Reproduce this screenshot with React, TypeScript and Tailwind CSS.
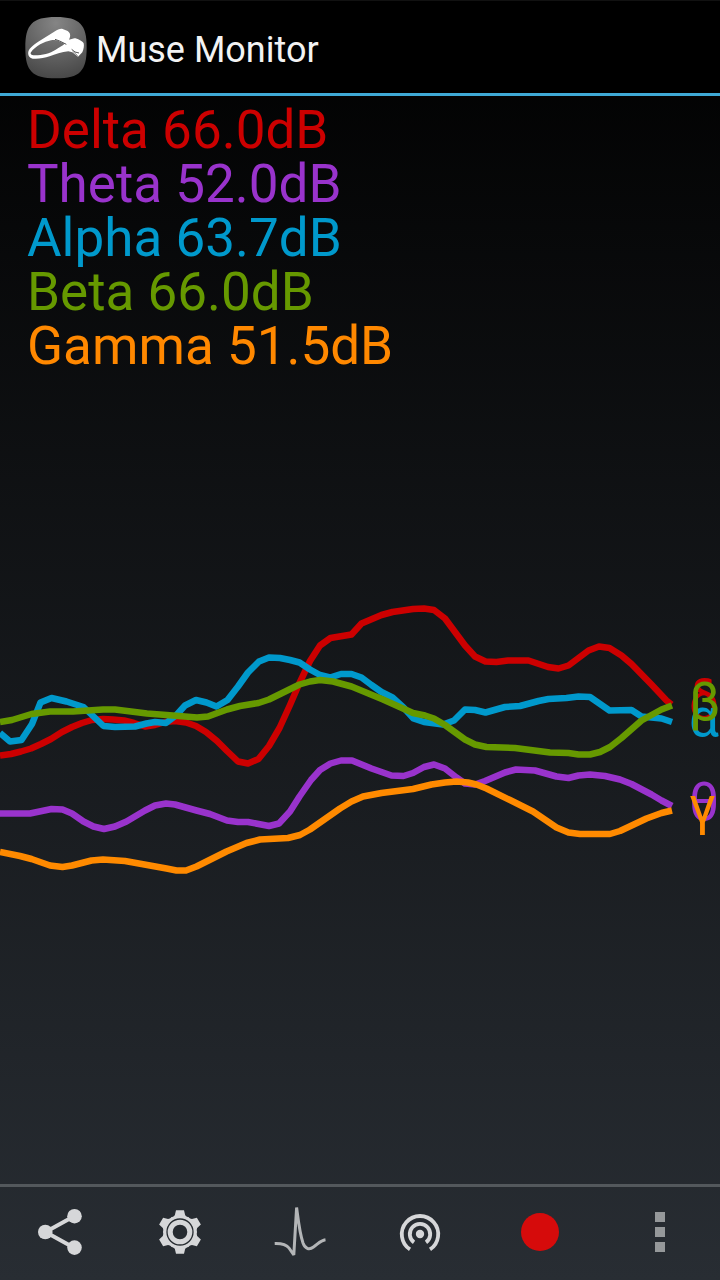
import type { ReactNode } from "react";

type Band = {
  name: string;
  level: string;
  symbol: string;
  textClass: string;
  color: string;
  labelY: number;
  points: string;
};

const bands: Band[] = [
  {
    name: "Delta",
    level: "66.0dB",
    symbol: "δ",
    textClass: "text-[#cc0000]",
    color: "#cc0000",
    labelY: 719,
    points:
      "0,755.5 11,754 21,751.5 31,748.5 41,744 51,739 62,732 72,727 82,723 92,720 103,719 113,719.5 124,720.5 134,723 145,726.5 155,725 165,722 175,721 186,722.5 196,726 206,732 217,741 227,751 238,761.5 248,763.5 258.5,759 269,746 279.5,728 290,705 299.5,683 310,661 320,645.5 330.5,638 351.5,634.5 361.5,623.5 381.5,615 392.5,612 413,609 424,608.5 434,610 445,618.5 465,645.5 475,656.5 485.5,661.5 496.5,662 508,660.5 528.5,660.5 548,667 558.5,668.5 568.5,665.5 588.5,650.5 599,646.5 609.5,648 621.5,655.5 631.5,664 651.5,684.5 666.5,700.5 671.5,704.5",
  },
  {
    name: "Theta",
    level: "52.0dB",
    symbol: "θ",
    textClass: "text-[#9933cc]",
    color: "#9933cc",
    labelY: 820,
    points:
      "0,813.5 30,813.5 51.5,809 62.5,809.5 72,813.5 83.5,821.5 93.5,826.5 104,829 115,826.5 126.5,821.5 145,810.5 155,805.5 166,803.5 175,804.5 196.5,810.5 210,814 227,820.5 238,822 248,822 269,826 279,823.5 290,811.5 299.5,796.5 311,780 320,770 330.5,763.5 341,760.5 352,760.5 371.5,768.5 391.5,775.5 403.5,776 413,773 424,767 434,764.5 445,768.5 456.5,777.5 465,783.5 475,784.5 485,781 505,772.5 516,769.5 535,770.5 556.5,776.5 568.5,778 578.5,775.5 590,774.5 605,776 620,779.5 631.5,784 651.5,794.5 661.5,800.5 672,806",
  },
  {
    name: "Alpha",
    level: "63.7dB",
    symbol: "α",
    textClass: "text-[#0099cc]",
    color: "#0099cc",
    labelY: 736,
    points:
      "0,733 10,741.5 21.5,740 32,724 40.5,702.5 51.5,698 66.5,701.5 83.5,707 93.5,716.5 103.5,726 115,727 135,726.5 146.5,723.5 155,722 166,723 176,715.5 185,705.5 196,700 206.5,702.5 216.5,706.5 227.5,700 238,686.5 248,672.5 259,661.5 269,657.5 280,658 290,660 299.5,662.5 310,669.5 320,675 330,677.5 341,674 351.5,674 361.5,677.5 371.5,685 381.5,692 392.5,697.5 403.5,707.5 413.5,718.5 424,722 443,724.5 454,720.5 465,709.5 475,710 485.5,712.5 505,707 520,706 538.5,701 548.5,699 566.5,698 578.5,696.5 590,697 609.5,710.5 631.5,710 641.5,716.5 661.5,718.5 672,722",
  },
  {
    name: "Beta",
    level: "66.0dB",
    symbol: "β",
    textClass: "text-[#669900]",
    color: "#669900",
    labelY: 720,
    points:
      "0,722 12,720 31.5,714 50,711.5 73,711.5 103,709.5 115,709.5 147,713.5 173,715.5 197,717.5 208,716.5 227,709.5 240,706 258.5,703 269,699.5 299.5,684.5 310,681.5 320,680 333,681.5 351.5,686.5 383,699.5 413,713 425,715.5 434,718.5 445,725 465,739.5 475,744.5 486.5,747 515,748 550,752.5 568.5,753 578.5,754.5 590,754.5 600,752 610,747 621.5,738 641.5,720.5 661.5,709.5 672,705.5",
  },
  {
    name: "Gamma",
    level: "51.5dB",
    symbol: "γ",
    textClass: "text-[#ff8800]",
    color: "#ff8a00",
    labelY: 824,
    points:
      "0,852 20,856 31.5,859 50,865.5 62.5,867 72,865.5 91.5,860.5 103,859.5 125,861 166.5,868.5 176.5,870.5 186,870.5 196.5,866.5 226.5,851.5 246.5,843 260,839.5 288,838 300,835 310,829.5 340,808.5 351.5,801.5 363,796.5 381.5,793 413,789 431.5,784.5 445,782.5 456.5,781.5 468,782.5 476.5,784.5 486.5,788.5 510,800 533,811.5 556.5,827.5 568.5,832.5 580,834 610,834 620,831 646.5,818.5 661.5,813 672,810.5",
  },
];

function AppIcon() {
  return (
    <svg viewBox="0 0 186 186" className="size-[62px] shrink-0" aria-hidden="true">
      <defs>
        <radialGradient id="tile" cx="0.5" cy="0.1" r="0.95">
          <stop offset="0" stopColor="#858585" />
          <stop offset="1" stopColor="#454545" />
        </radialGradient>
      </defs>
      <path
        d="M93 0C130 0 152 6 166 20S185 56 185 92 180 150 166 164 130 184 93 184 34 178 20 164 1 128 1 92 6 34 20 20 56 0 93 0Z"
        fill="url(#tile)"
      />
      <path
        fill="#fff"
        fillRule="evenodd"
        d="M10 104C13 93 28 81 48 69L90 43C98 38 106 34 113 36L128 42C134 46 137 53 135 60L132 68L148 64C157 64 172 72 176 79C178 86 176 97 172 106L159 119L142 106L130 103C110 105 90 112 74 118C58 123 39 127 23 125C13 122 8 114 10 104ZM17 107C16 113 22 115 31 115C51 115 75 109 92 98C103 90 113 86 119 80L101 72C94 68 86 68 78 70C58 74 32 86 17 107Z"
      />
      <path d="M90 67L104 72L124 82M140 97L150 105L162 108" fill="none" stroke="#555" strokeWidth="3" />
      <path d="M143 103L158 116" fill="none" stroke="#555" strokeWidth="2" />
    </svg>
  );
}

function Glyph({ children }: { children: ReactNode }) {
  return (
    <svg viewBox="0 0 60 60" className="size-[60px]" aria-hidden="true">
      {children}
    </svg>
  );
}

function ShareIcon() {
  return (
    <Glyph>
      <path d="M44.5 14L15.5 30L44.5 46" fill="none" stroke="#d6d7d9" strokeWidth="4" />
      <g fill="#d6d7d9">
        <circle cx="15.3" cy="30" r="7.3" />
        <circle cx="44.5" cy="14.2" r="7.3" />
        <circle cx="44.5" cy="45.6" r="7.3" />
      </g>
    </Glyph>
  );
}

function GearIcon() {
  return (
    <Glyph>
      <g fill="#d6d7d9">
        {[0, 60, 120, 180, 240, 300].map((angle) => (
          <path key={angle} d="M26 8.2H34L35.2 13.2Q36 14.5 39 15.6L36 20H24L21 15.6Q24 14.5 24.8 13.2Z" transform={`rotate(${angle} 30 30)`} />
        ))}
      </g>
      <circle cx="30" cy="30" r="11.5" fill="none" stroke="#d6d7d9" strokeWidth="8.4" />
      <circle cx="30" cy="30" r="13" fill="none" stroke="#272c31" strokeWidth="1.3" />
    </Glyph>
  );
}

function PulseIcon() {
  return (
    <Glyph>
      <path
        d="M4.7 41.4C12 41.2 16.5 42.5 19 46L23.8 53L26.6 5.500C28 16 29.5 31 33 41C35 46.5 39 48.500 43.500 45C48 42 50.500 38.500 55.500 37.800"
        fill="none"
        stroke="#b3b5b7"
        strokeWidth="3"
        strokeLinejoin="bevel"
      />
    </Glyph>
  );
}

function BroadcastIcon() {
  return (
    <Glyph>
      <circle cx="30" cy="32" r="4.2" fill="#d6d7d9" />
      <g fill="none" stroke="#d6d7d9">
        <path d="M24 40.400A10.200 10.200 0 1 1 36 40.400" strokeWidth="3.800" />
        <path d="M20 47.400A18.200 18.200 0 1 1 40 47.400" strokeWidth="3.800" />
      </g>
    </Glyph>
  );
}

function RecordIcon() {
  return (
    <Glyph>
      <circle cx="30" cy="30" r="19" fill="#d60b0b" />
    </Glyph>
  );
}

function OverflowIcon() {
  return (
    <Glyph>
      <path d="M25 10h10v10h-10zM25 25h10v10h-10zM25 40h10v10h-10z" fill="#95989a" />
    </Glyph>
  );
}

const actions = [
  { label: "Share", icon: <ShareIcon /> },
  { label: "Settings", icon: <GearIcon /> },
  { label: "Waveform", icon: <PulseIcon /> },
  { label: "Stream", icon: <BroadcastIcon /> },
  { label: "Record", icon: <RecordIcon /> },
  { label: "More options", icon: <OverflowIcon /> },
];

export default function App() {
  return (
    <div className="flex min-h-screen flex-col bg-linear-to-b/srgb from-black to-[#282d33] font-['Roboto',sans-serif]">
      <header className="flex h-24 items-center gap-[9px] border-t border-b-3 border-t-[#111111] border-b-[#3fa9d6] bg-black pt-[2px] pl-[25px]">
        <AppIcon />
        <h1 className="pt-1 text-[36px] leading-[44px] text-[#f3f3f3]">Muse Monitor</h1>
      </header>

      <main className="flex flex-1 flex-col pt-[7px]">
        <ul className="px-[27px] text-[53px] leading-[54px]">
          {bands.map((band) => (
            <li key={band.name} className={band.textClass}>
              {band.name} {band.level}
            </li>
          ))}
        </ul>
        <svg viewBox="0 373 720 811" className="w-full" role="img" aria-label="Brain wave levels">
          {bands.map((band) => (
            <g key={band.name}>
              <polyline points={band.points} fill="none" stroke={band.color} strokeWidth="6.5" strokeLinejoin="round" />
              <text x="689" y={band.labelY} fill={band.color} fontSize="53">
                {band.symbol}
              </text>
            </g>
          ))}
        </svg>
      </main>

      <footer className="grid h-24 grid-cols-6 border-t-3 border-[#53585c] pb-[3px]">
        {actions.map((action) => (
          <button key={action.label} type="button" aria-label={action.label} className="flex items-center justify-center">
            {action.icon}
          </button>
        ))}
      </footer>
    </div>
  );
}
